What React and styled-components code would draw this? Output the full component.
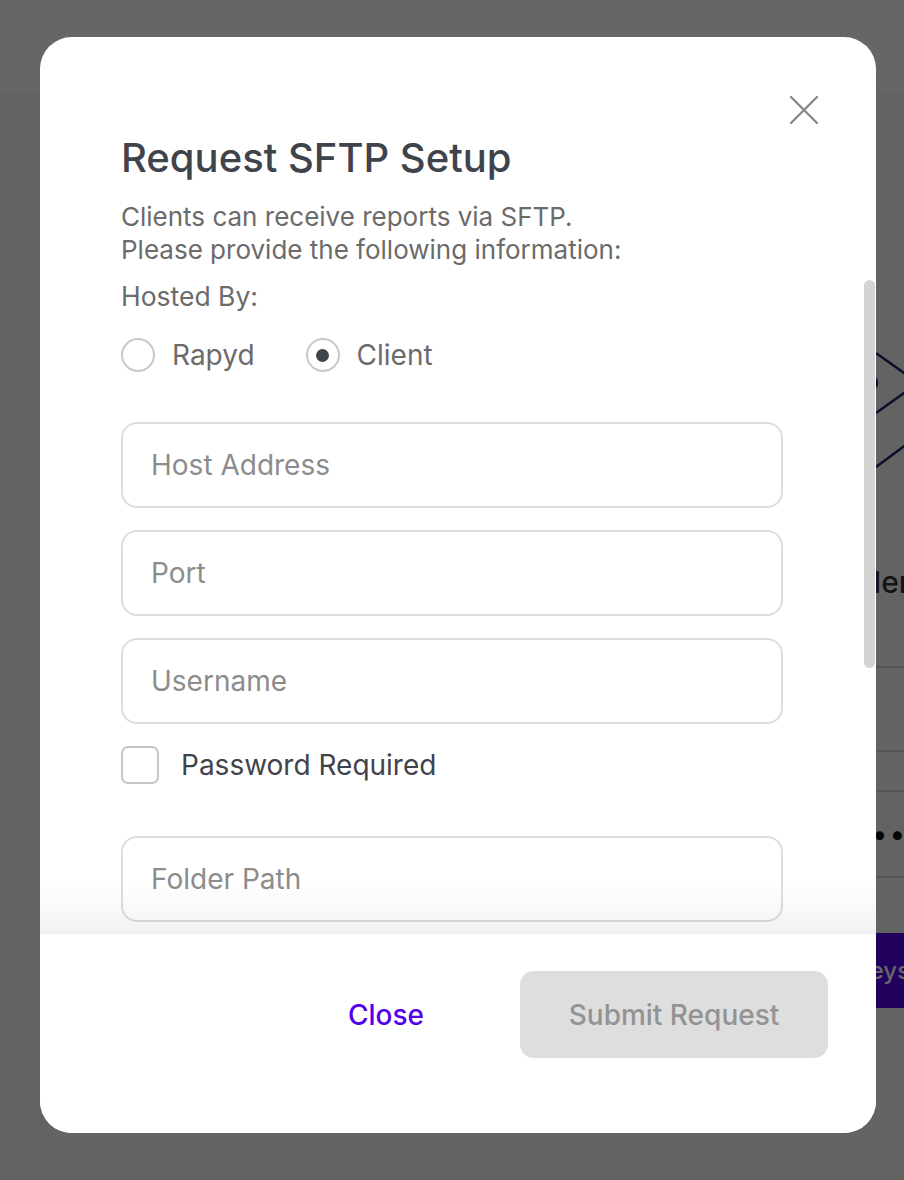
import React, { useState } from 'react'
import styled, { createGlobalStyle } from 'styled-components'

const GlobalStyle = createGlobalStyle`
  * { box-sizing: border-box; }
  html, body { margin: 0; padding: 0; }
  body {
    width: 904px;
    height: 1180px;
    overflow: hidden;
    font-family: Inter, "Noto Sans", sans-serif;
  }
`

const App = () => {
  const [host, setHost] = useState('client')
  const [needsPassword, setNeedsPassword] = useState(false)

  return (
    <>
      <GlobalStyle />

      {/* page behind the dialog */}
      <Page>
        <TopBar />
        <PageBody>
          <ContentColumn>
            <Illustration width="400" height="200" viewBox="0 0 400 200">
              <path d="M276 53 L318 83 L276 113" fill="none" stroke="#1a2466" strokeWidth="2.5" />
              <path d="M276 167 L330 127" fill="none" stroke="#1a2466" strokeWidth="2.5" />
              <circle cx="270" cy="83" r="7" fill="none" stroke="#1a2466" strokeWidth="2.5" />
            </Illustration>
            <SectionTitle>Report Scheduler</SectionTitle>
            <Table>
              <Row $h={66}><Cell>Protocol</Cell></Row>
              <Row $h={84}><Cell>Host</Cell></Row>
              <Row $h={40}><Cell>Port</Cell></Row>
              <Row $h={86}><Cell>Password</Cell><Masked>••••••••</Masked></Row>
            </Table>
            <PageButton>Generate API Keys</PageButton>
          </ContentColumn>
        </PageBody>
      </Page>

      <Overlay>
        <Modal>
          <CloseIcon aria-label="Close">
            <svg width="28" height="28" viewBox="0 0 28 28">
              <path d="M1 1 L27 27 M27 1 L1 27" stroke="#8a8a8a" strokeWidth="2.4" strokeLinecap="round" />
            </svg>
          </CloseIcon>

          <Body>
            <Title>Request SFTP Setup</Title>
            <Description>
              Clients can receive reports via SFTP.<br />
              Please provide the following information:
            </Description>
            <Label>Hosted By:</Label>

            <RadioGroup>
              <RadioOption onClick={() => setHost('rapyd')}>
                <RadioCircle $checked={host === 'rapyd'} />
                Rapyd
              </RadioOption>
              <RadioOption onClick={() => setHost('client')}>
                <RadioCircle $checked={host === 'client'} />
                Client
              </RadioOption>
            </RadioGroup>

            <Fields>
              <Input placeholder="Host Address" />
              <Input placeholder="Port" />
              <Input placeholder="Username" />
            </Fields>

            <CheckRow onClick={() => setNeedsPassword(!needsPassword)}>
              <CheckBox $checked={needsPassword} />
              Password Required
            </CheckRow>

            <Input placeholder="Folder Path" $top={52} />
            <Input placeholder="Private Key" $top={22} />
          </Body>

          <ScrollThumb />

          <Footer>
            <TextButton>Close</TextButton>
            <SubmitButton disabled>Submit Request</SubmitButton>
          </Footer>
        </Modal>
      </Overlay>
    </>
  )
}

// background page

const Page = styled.div`
  width: 904px;
  height: 1180px;
  display: flex;
  flex-direction: column;
  background: #f7f7f7;
`

const TopBar = styled.header`
  height: 93px;
  background: #ffffff;
`

const PageBody = styled.main`
  flex: 1;
  padding: 207px 0 0 600px;
  overflow: hidden;
`

const ContentColumn = styled.div`
  width: 500px;
  display: flex;
  flex-direction: column;
`

const Illustration = styled.svg`
  display: block;
`

const SectionTitle = styled.h2`
  margin: 62px 0 0 0;
  font-size: 30px;
  line-height: 40px;
  font-weight: 500;
  color: #333;
  padding-left: 61px;
  white-space: nowrap;
`

const Table = styled.div`
  display: flex;
  flex-direction: column;
`

const Row = styled.div`
  height: ${p => p.$h}px;
  border-bottom: 2px solid #d6d6d6;
  display: flex;
  align-items: center;
  font-size: 22px;
  color: #333;
`

const Cell = styled.span`
  width: 254px;
`

const Masked = styled.span`
  font-size: 28px;
  letter-spacing: 2px;
  color: #111;
  white-space: nowrap;
`

const PageButton = styled.button`
  margin-top: 55px;
  align-self: flex-start;
  margin-left: 67px;
  height: 75px;
  padding: 0 30px;
  border: none;
  border-radius: 8px;
  background: #5500eb;
  color: #ffffff;
  font-family: Inter, sans-serif;
  font-size: 24px;
  font-weight: 500;
  white-space: nowrap;
`

// dialog

const Overlay = styled.div`
  position: fixed;
  inset: 0;
  background: rgba(0, 0, 0, 0.6);
  display: flex;
  padding: 37px 28px 47px 40px;
`

const Modal = styled.div`
  position: relative;
  flex: 1;
  display: flex;
  flex-direction: column;
  background: #ffffff;
  border-radius: 32px;
  overflow: hidden;
`

const CloseIcon = styled.button`
  position: absolute;
  top: 59px;
  right: 58px;
  width: 28px;
  height: 28px;
  padding: 0;
  border: none;
  background: none;
  cursor: pointer;
  svg { display: block; }
`

const Body = styled.div`
  flex: 1;
  overflow: hidden;
  padding: 99px 93px 0 81px;
  display: flex;
  flex-direction: column;
`

const Title = styled.h1`
  margin: 0;
  font-size: 40px;
  line-height: 44px;
  font-weight: 500;
  color: #3f434b;
`

const Description = styled.p`
  margin: 20px 0 0 0;
  font-size: 26px;
  line-height: 33px;
  color: #6b6b6b;
`

const Label = styled.div`
  margin-top: 14px;
  font-size: 26.5px;
  line-height: 33px;
  color: #6b6b6b;
`

const RadioGroup = styled.div`
  margin-top: 25px;
  display: flex;
  gap: 51px;
`

const RadioOption = styled.label`
  display: flex;
  align-items: center;
  gap: 17px;
  height: 34px;
  font-size: 28px;
  color: #6b6b6b;
  cursor: pointer;
`

const RadioCircle = styled.span`
  width: 34px;
  height: 34px;
  border-radius: 50%;
  border: 2px solid #c9c9c9;
  display: flex;
  align-items: center;
  justify-content: center;

  &::after {
    content: '';
    width: 13px;
    height: 13px;
    border-radius: 50%;
    background: #3f434b;
    display: ${p => (p.$checked ? 'block' : 'none')};
  }
`

const Fields = styled.div`
  margin-top: 50px;
  display: flex;
  flex-direction: column;
  gap: 22px;
`

const Input = styled.input`
  flex-shrink: 0;
  width: 100%;
  height: 86px;
  margin-top: ${p => (p.$top ? `${p.$top}px` : '0')};
  padding: 0 28px;
  border: 2px solid #dddddd;
  border-radius: 16px;
  font-family: Inter, sans-serif;
  font-size: 28px;
  color: #3f434b;
  outline: none;

  &::placeholder {
    color: #8c8c8c;
  }
`

const CheckRow = styled.label`
  margin-top: 22px;
  display: flex;
  align-items: center;
  gap: 22px;
  height: 38px;
  font-size: 28px;
  color: #3f434b;
  cursor: pointer;
`

const CheckBox = styled.span`
  width: 38px;
  height: 38px;
  border-radius: 7px;
  border: 2.5px solid #c6c6c6;
  background: ${p => (p.$checked ? '#5500eb' : '#ffffff')};
`

const ScrollThumb = styled.div`
  position: absolute;
  top: 243px;
  right: 1px;
  width: 11px;
  height: 388px;
  border-radius: 6px;
  background: #d4d4d4;
`

const Footer = styled.footer`
  position: relative;
  height: 199px;
  flex-shrink: 0;
  background: #ffffff;
  display: flex;
  justify-content: flex-end;
  align-items: flex-start;
  gap: 36px;
  padding: 37px 48px 0 0;

  &::before {
    content: '';
    position: absolute;
    left: 0;
    right: 0;
    bottom: 100%;
    height: 52px;
    background: linear-gradient(to bottom, rgba(0, 0, 0, 0), rgba(0, 0, 0, 0.05));
    pointer-events: none;
  }
`

const TextButton = styled.button`
  width: 196px;
  height: 87px;
  border: none;
  background: none;
  font-family: Inter, sans-serif;
  font-size: 28px;
  font-weight: 500;
  color: #5500eb;
  cursor: pointer;
`

const SubmitButton = styled.button`
  width: 308px;
  height: 87px;
  border: none;
  border-radius: 14px;
  background: #dedede;
  font-family: Inter, sans-serif;
  font-size: 28px;
  font-weight: 500;
  color: #939393;
`

export default App
